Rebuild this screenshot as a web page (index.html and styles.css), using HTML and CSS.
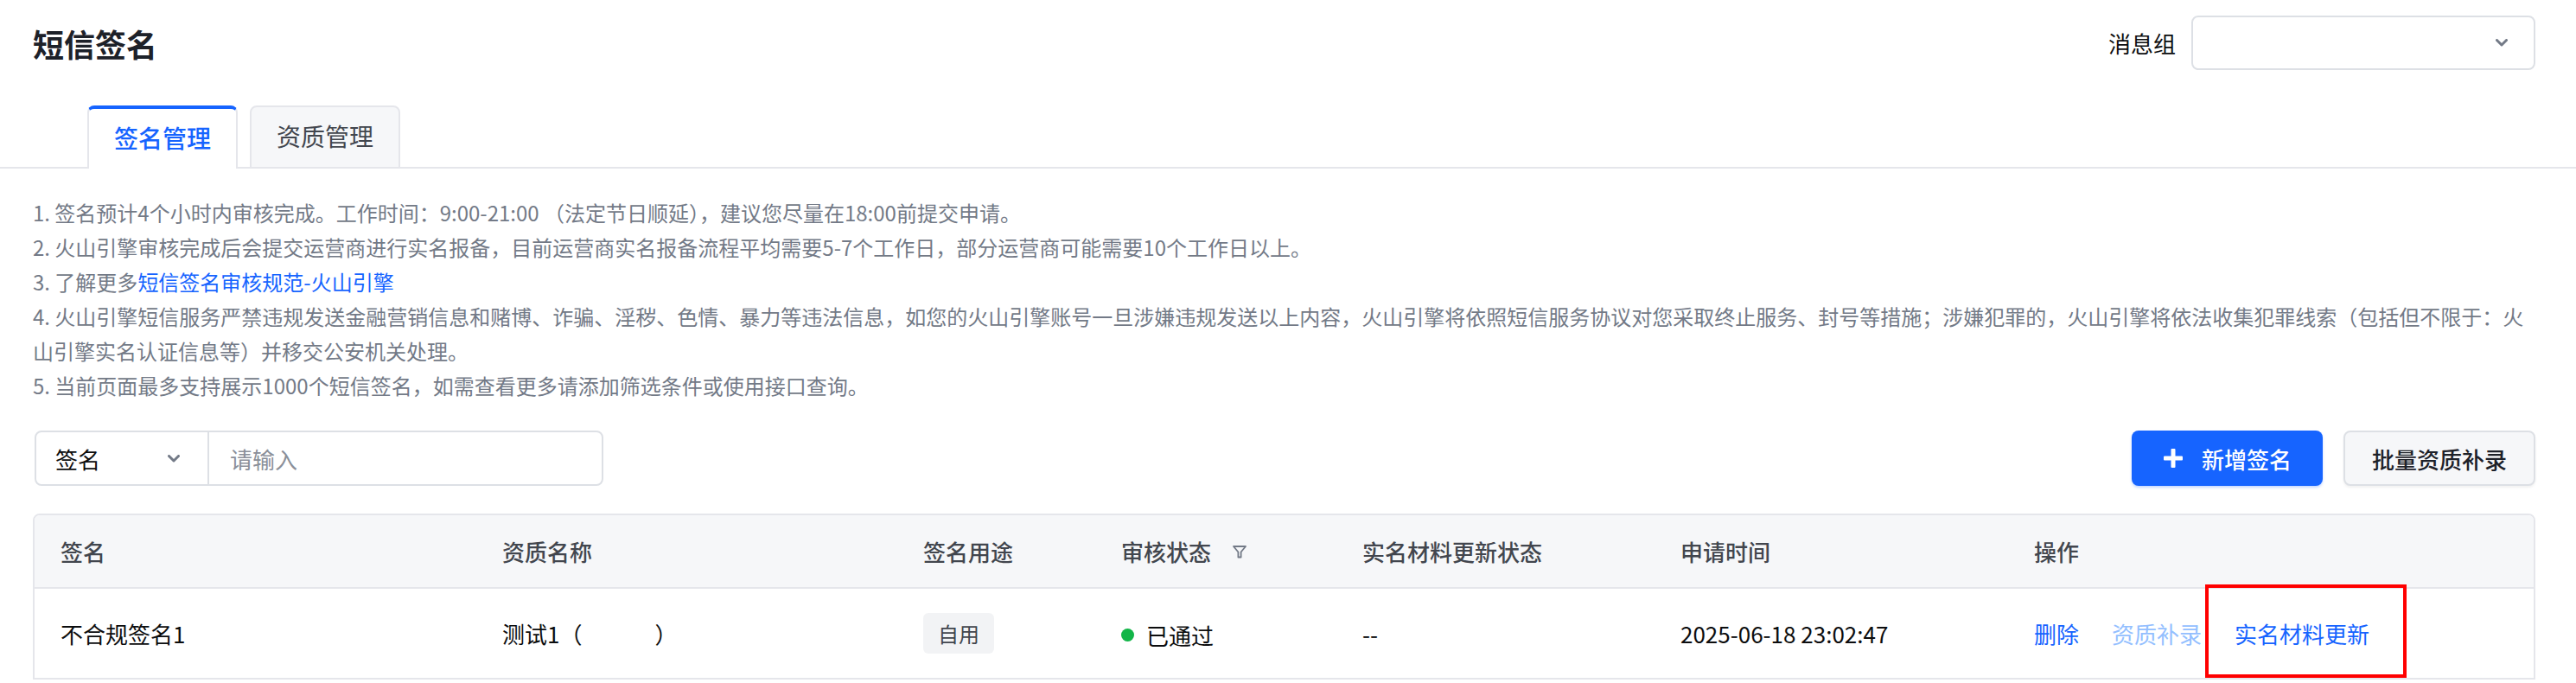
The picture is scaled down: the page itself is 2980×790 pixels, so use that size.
FILE: index.html
```html
<!DOCTYPE html>
<html lang="zh-CN">
<head>
  <meta charset="UTF-8" />
  <title>短信签名</title>
  <link rel="stylesheet" href="styles.css">
</head>
<body>

  <div class="page-head">
    <h1 class="page-title">短信签名</h1>
    <div class="group-filter">
      <span class="group-label">消息组</span>
      <div class="group-select">
        <svg class="chevron" width="14" height="9" viewBox="0 0 14 9"><polyline points="1.5,1.5 7,7 12.5,1.5" /></svg>
      </div>
    </div>
  </div>

  <div class="tabs">
    <div class="tab tab-active">签名管理</div>
    <div class="tab">资质管理</div>
  </div>

  <div class="content">
    <ul class="notice">
      <li>1. 签名预计4个小时内审核完成。工作时间：9:00-21:00 （法定节日顺延），建议您尽量在18:00前提交申请。</li>
      <li>2. 火山引擎审核完成后会提交运营商进行实名报备，目前运营商实名报备流程平均需要5-7个工作日，部分运营商可能需要10个工作日以上。</li>
      <li>3. 了解更多<a href="#">短信签名审核规范-火山引擎</a></li>
      <li>4. 火山引擎短信服务严禁违规发送金融营销信息和赌博、诈骗、淫秽、色情、暴力等违法信息，如您的火山引擎账号一旦涉嫌违规发送以上内容，火山引擎将依照短信服务协议对您采取终止服务、封号等措施；涉嫌犯罪的，火山引擎将依法收集犯罪线索（包括但不限于：火山引擎实名认证信息等）并移交公安机关处理。</li>
      <li>5. 当前页面最多支持展示1000个短信签名，如需查看更多请添加筛选条件或使用接口查询。</li>
    </ul>

    <div class="toolbar">
      <div class="search">
        <div class="search-field">
          <span>签名</span>
          <svg class="chevron" width="14" height="9" viewBox="0 0 14 9"><polyline points="1.5,1.5 7,7 12.5,1.5" /></svg>
        </div>
        <div class="search-input">请输入</div>
      </div>
      <div class="actions">
        <button class="btn btn-primary">
          <svg width="22" height="22" viewBox="0 0 22 22"><rect x="8.5" y="0" width="5" height="22" rx="1" /><rect x="0" y="8.5" width="22" height="5" rx="1" /></svg>
          新增签名
        </button>
        <button class="btn btn-default">批量资质补录</button>
      </div>
    </div>

    <div class="table-wrap">
      <table class="sign-table">
        <colgroup>
          <col style="width: 511px">
          <col style="width: 487px">
          <col style="width: 229px">
          <col style="width: 279px">
          <col style="width: 368px">
          <col style="width: 409px">
          <col>
        </colgroup>
        <thead>
          <tr>
            <th>签名</th>
            <th>资质名称</th>
            <th>签名用途</th>
            <th>
              <span class="th-filter">审核状态
                <svg width="18" height="18" viewBox="0 0 18 18"><path d="M2 3 H16 L10.6 9.5 V15.5 H7.4 V9.5 Z" /></svg>
              </span>
            </th>
            <th>实名材料更新状态</th>
            <th>申请时间</th>
            <th>操作</th>
          </tr>
        </thead>
        <tbody>
          <tr>
            <td>不合规签名1</td>
            <td>测试1（<span class="redacted"></span>）</td>
            <td><span class="tag">自用</span></td>
            <td><span class="status"><span class="dot"></span>已通过</span></td>
            <td>--</td>
            <td>2025-06-18 23:02:47</td>
            <td>
              <div class="row-actions">
                <a href="#" class="link">删除</a>
                <a href="#" class="link link-disabled">资质补录</a>
                <a href="#" class="link link-marked">实名材料更新</a>
              </div>
            </td>
          </tr>
        </tbody>
      </table>
    </div>
  </div>

</body>
</html>
```

FILE: styles.css
```css
body {
  margin: 0;
  font-family: "Noto Sans CJK SC", "Noto Sans", sans-serif;
  color: #0c0d0e;
  background: #fff;
}

.page-head {
  display: flex;
  justify-content: space-between;
  align-items: center;
  height: 63px;
  padding: 18px 47px 0 38px;
}

.page-title {
  margin: 0;
  font-size: 36px;
  font-weight: 700;
  line-height: 1;
  color: #1d2129;
}

.group-filter {
  display: flex;
  align-items: center;
  gap: 18px;
}

.group-label {
  font-size: 26px;
  color: #0c0d0e;
}

.group-select {
  box-sizing: border-box;
  width: 398px;
  height: 63px;
  border: 2px solid #dde0e5;
  border-radius: 8px;
  display: flex;
  align-items: center;
  justify-content: flex-end;
  padding-right: 30px;
}

.chevron polyline {
  fill: none;
  stroke: #737a87;
  stroke-width: 3;
  stroke-linecap: round;
  stroke-linejoin: round;
}

.tabs {
  display: flex;
  gap: 14px;
  margin-top: 41px;
  padding-left: 101px;
  border-bottom: 2px solid #e5e6eb;
}

.tab {
  box-sizing: border-box;
  height: 73px;
  margin-bottom: -2px;
  padding: 0 29px 4px;
  display: flex;
  align-items: center;
  font-size: 28px;
  color: #42464e;
  background: #f6f7f9;
  border: 2px solid #e5e6eb;
  border-radius: 8px 8px 0 0;
}

.tab-active {
  background: #fff;
  color: #1664ff;
  font-weight: 500;
  border-top: 4px solid #1664ff;
  border-bottom: none;
}

.content {
  padding: 31px 47px 0 38px;
}

.notice {
  margin: 0;
  padding: 0;
  list-style: none;
  font-size: 24px;
  line-height: 40px;
  color: #737a87;
}

.notice a {
  color: #1664ff;
  text-decoration: none;
}

.toolbar {
  display: flex;
  justify-content: space-between;
  align-items: center;
  margin-top: 32px;
}

.search {
  box-sizing: border-box;
  display: flex;
  width: 658px;
  height: 64px;
  margin-left: 2px;
  border: 2px solid #dde0e5;
  border-radius: 8px;
  font-size: 26px;
}

.search-field {
  box-sizing: border-box;
  width: 200px;
  display: flex;
  align-items: center;
  justify-content: space-between;
  padding: 0 32px 0 22px;
  border-right: 2px solid #dde0e5;
  color: #0c0d0e;
}

.search-input {
  flex: 1;
  display: flex;
  align-items: center;
  padding-left: 24px;
  color: #8a8f99;
}

.actions {
  display: flex;
  gap: 24px;
}

.btn {
  box-sizing: border-box;
  height: 64px;
  display: flex;
  align-items: center;
  border-radius: 8px;
  font-family: inherit;
  font-size: 26px;
  font-weight: 500;
  cursor: pointer;
}

.btn-primary {
  gap: 22px;
  padding: 0 36px 0 37px;
  background: #1664ff;
  color: #fff;
  border: none;
  box-shadow: 0 2px 3px rgba(22, 100, 255, 0.25);
}

.btn-primary svg {
  fill: #fff;
}

.btn-default {
  padding: 0 31px;
  background: #f6f7f9;
  color: #1d2129;
  border: 2px solid #dde0e5;
  box-shadow: 0 2px 3px rgba(0, 0, 0, 0.06);
}

.table-wrap {
  margin-top: 32px;
  border: 2px solid #e5e6eb;
  border-radius: 8px 8px 0 0;
  overflow: hidden;
}

.sign-table {
  width: 100%;
  table-layout: fixed;
  border-collapse: separate;
  border-spacing: 0;
  font-size: 26px;
}

.sign-table th {
  height: 83px;
  padding: 0 30px;
  text-align: left;
  font-weight: 500;
  color: #42464e;
  background: #f6f7f9;
  border-bottom: 2px solid #e5e6eb;
}

.sign-table td {
  height: 103px;
  padding: 0 30px;
  color: #0c0d0e;
  white-space: nowrap;
}

.th-filter {
  display: inline-flex;
  align-items: center;
  gap: 24px;
}

.th-filter svg path {
  fill: none;
  stroke: #737a87;
  stroke-width: 1.8;
  stroke-linejoin: round;
}

.redacted {
  display: inline-block;
  width: 84px;
}

.tag {
  display: inline-block;
  padding: 0 17px;
  line-height: 47px;
  font-size: 24px;
  color: #42464e;
  background: #f2f3f5;
  border-radius: 6px;
}

.status {
  display: inline-flex;
  align-items: center;
  gap: 14px;
}

.dot {
  width: 15px;
  height: 15px;
  border-radius: 50%;
  background: #12b548;
}

.row-actions {
  display: flex;
  gap: 38px;
}

.link {
  position: relative;
  color: #1664ff;
  text-decoration: none;
}

.link-disabled {
  color: #94bfff;
}

.link-marked::after {
  content: "";
  position: absolute;
  left: -34px;
  right: -43px;
  top: -38px;
  bottom: -33px;
  border: 4px solid #ff0000;
}
```
